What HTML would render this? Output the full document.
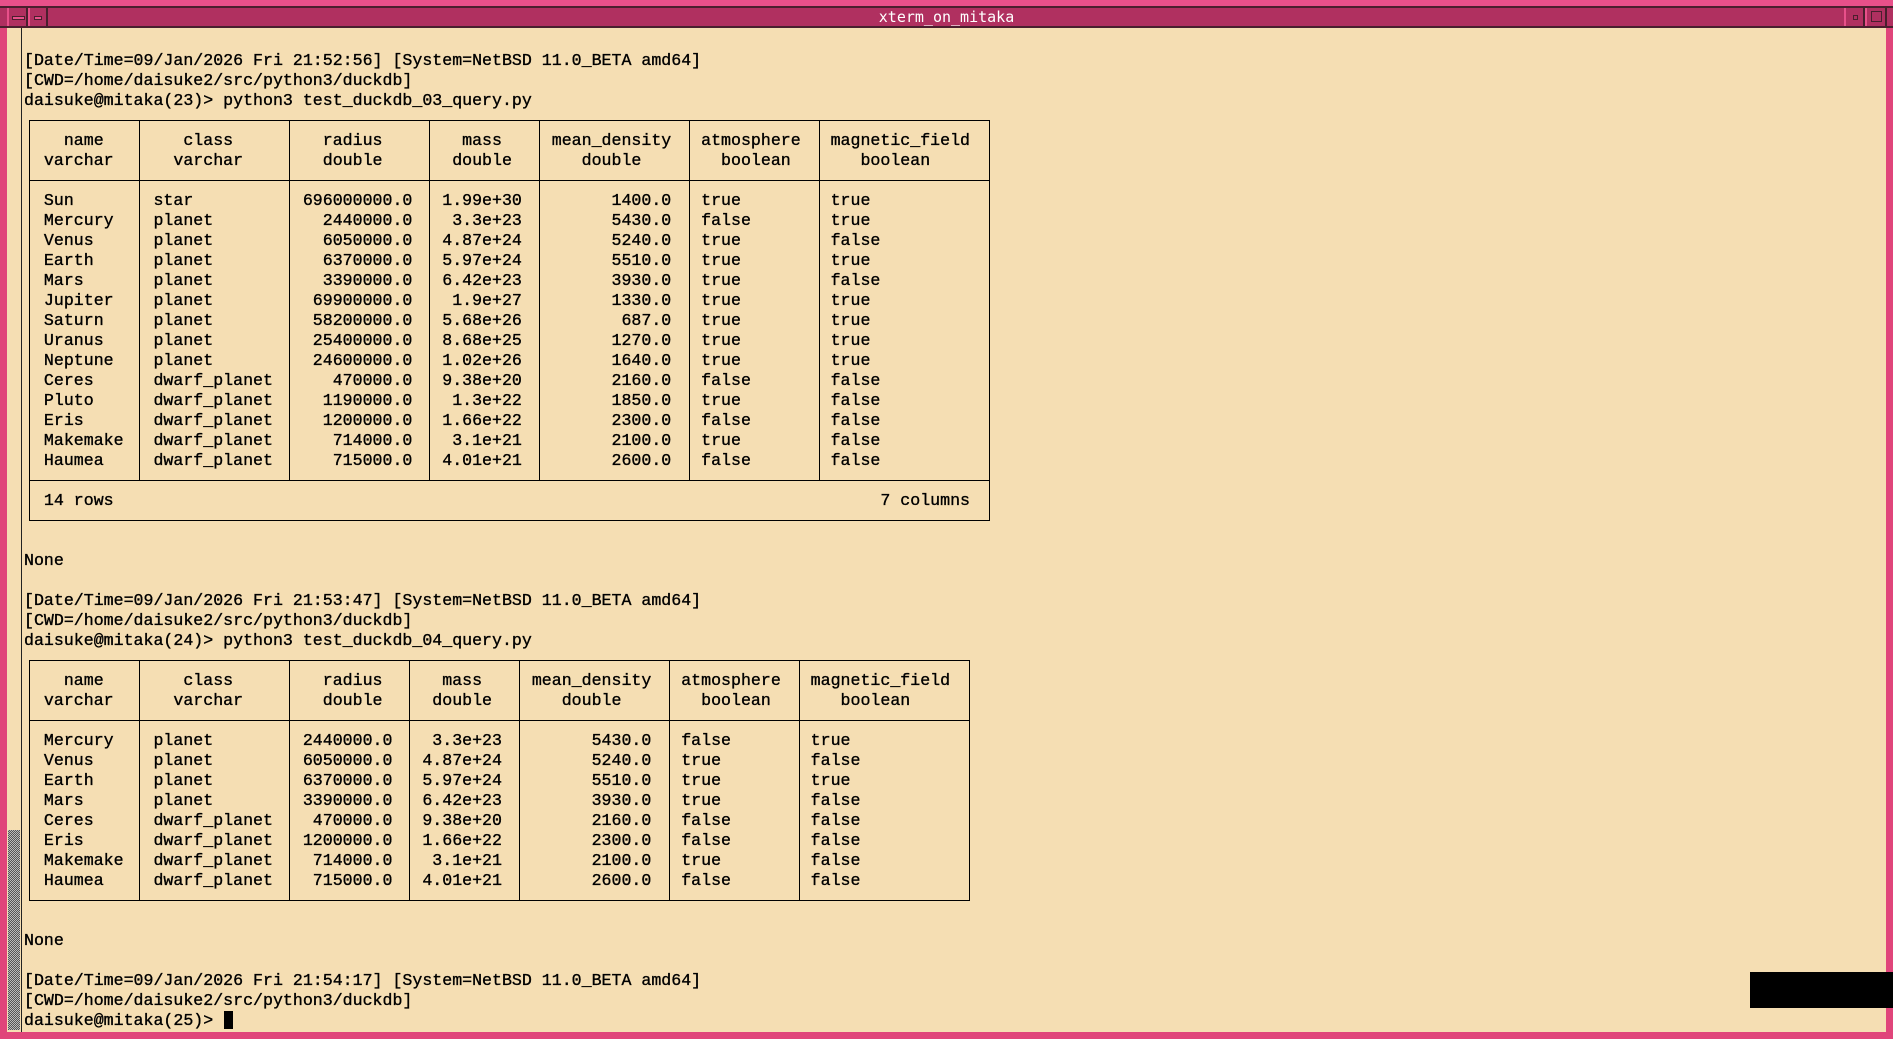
<!DOCTYPE html>
<html><head><meta charset="utf-8">
<style>
html,body{margin:0;padding:0;width:1893px;height:1039px;overflow:hidden;background:#f5deb3;}
#frame{position:absolute;left:0;top:0;width:1893px;height:1039px;background:#e0457a;}
#inner{position:absolute;left:7px;top:28px;width:1879px;height:1004px;background:#f5deb3;}
#tb{position:absolute;left:0;top:0;width:1893px;height:28px;background:#b03060;}
#tb .top{position:absolute;left:0;top:0;width:1893px;height:6px;background:#e8508a;border-bottom:2px solid #4a1f2e;}
#tb .bot{position:absolute;left:0;top:26px;width:1893px;height:2px;background:#4a1f2e;}
#title{position:absolute;left:0;width:1893px;top:9px;text-align:center;color:#fff;font:15px/17px "DejaVu Sans Mono","Liberation Mono",monospace;}
.btn{position:absolute;top:8px;height:18px;background:#b03060;border-left:2px solid #e8508a;border-right:2px solid #4a1f2e;}
#scroll{position:absolute;left:7px;top:28px;width:14px;height:1004px;border-right:1px solid #222;}
#thumb{position:absolute;left:8px;top:830px;width:12px;height:200px;background:repeating-conic-gradient(#555 0 25%,#bbb 0 50%) 0 0/2px 2px;}
#term{position:absolute;left:24px;top:51px;font:16.6px/20px "Liberation Mono",monospace;color:#000;white-space:pre;-webkit-text-stroke:0.35px #000;}
.h{position:absolute;height:1px;background:#000;}
.v{position:absolute;width:1px;background:#000;}
#blk{position:absolute;left:1750px;top:972px;width:143px;height:36px;background:#000;}
#cur{position:absolute;left:224px;top:1011px;width:9px;height:18px;background:#000;}
</style></head><body>
<div id="frame"></div>
<div id="inner"></div>
<div id="tb"><div class="top"></div><div class="bot"></div>
<div class="btn" style="left:7px;width:17px"><div style="position:absolute;left:3px;top:8px;width:11px;height:2px;border:1px solid #4a1f2e;background:#e8508a"></div></div>
<div class="btn" style="left:28px;width:16px"><div style="position:absolute;left:4px;top:8px;width:6px;height:2px;border:1px solid #4a1f2e;background:#e8508a"></div></div>
<div class="btn" style="left:1844px;width:17px"><div style="position:absolute;left:7px;top:7px;width:3px;height:3px;border:1px solid #4a1f2e"></div></div>
<div class="btn" style="left:1865px;width:18px"><div style="position:absolute;left:4px;top:3px;width:9px;height:9px;border:1px solid #4a1f2e"></div></div>
<div id="title">xterm_on_mitaka</div></div>
<div id="scroll"></div><div id="thumb"></div>
<div id="term"></div>
<div id="lines"></div>
<div id="cur"></div>
<div id="blk"></div>
<script>
function padC(s,w,off){return (' '.repeat(off)+s+' '.repeat(w)).slice(0,w);}
function padR(s,w){return (' '.repeat(w)+s+' ').slice(-w);}
function padL(s,w){return (' '+s+' '.repeat(w)).slice(0,w);}
var d1=[["Sun","star","696000000.0","1.99e+30","1400.0","true","true"],
["Mercury","planet","2440000.0","3.3e+23","5430.0","false","true"],
["Venus","planet","6050000.0","4.87e+24","5240.0","true","false"],
["Earth","planet","6370000.0","5.97e+24","5510.0","true","true"],
["Mars","planet","3390000.0","6.42e+23","3930.0","true","false"],
["Jupiter","planet","69900000.0","1.9e+27","1330.0","true","true"],
["Saturn","planet","58200000.0","5.68e+26","687.0","true","true"],
["Uranus","planet","25400000.0","8.68e+25","1270.0","true","true"],
["Neptune","planet","24600000.0","1.02e+26","1640.0","true","true"],
["Ceres","dwarf_planet","470000.0","9.38e+20","2160.0","false","false"],
["Pluto","dwarf_planet","1190000.0","1.3e+22","1850.0","true","false"],
["Eris","dwarf_planet","1200000.0","1.66e+22","2300.0","false","false"],
["Makemake","dwarf_planet","714000.0","3.1e+21","2100.0","true","false"],
["Haumea","dwarf_planet","715000.0","4.01e+21","2600.0","false","false"]];
var d2=d1.filter(function(r){return ["Mercury","Venus","Earth","Mars","Ceres","Eris","Makemake","Haumea"].indexOf(r[0])>=0;});
function table(data,W,h1off,h2off){
 var l=[];
 var h1=["name","class","radius","mass","mean_density","atmosphere","magnetic_field"];
 var h2=["varchar","varchar","double","double","double","boolean","boolean"];
 function row(cells){return ' '+cells.join(' ');}
 l.push(row(h1.map(function(s,i){return padC(s,W[i],h1off[i]);})));
 l.push(row(h2.map(function(s,i){return padC(s,W[i],h2off[i]);})));
 l.push('');
 data.forEach(function(r){l.push(row([padL(r[0],W[0]),padL(r[1],W[1]),padR(r[2],W[2]),padR(r[3],W[3]),padR(r[4],W[4]),padL(r[5],W[5]),padL(r[6],W[6])]));});
 return l;
}
var W1=[10,14,13,10,14,12,16],W2=[10,14,11,10,14,12,16];
var L=[];
L.push("[Date/Time=09/Jan/2026 Fri 21:52:56] [System=NetBSD 11.0_BETA amd64]");
L.push("[CWD=/home/daisuke2/src/python3/duckdb]");
L.push("daisuke@mitaka(23)> python3 test_duckdb_03_query.py");
L.push("");
L=L.concat(table(d1,W1,[3,4,3,3,1,1,1],[1,3,3,2,4,3,4]));
L.push("");
L.push(' '+padL("14 rows",30)+padR("7 columns",65));
L.push("");L.push("");L.push("None");L.push("");
L.push("[Date/Time=09/Jan/2026 Fri 21:53:47] [System=NetBSD 11.0_BETA amd64]");
L.push("[CWD=/home/daisuke2/src/python3/duckdb]");
L.push("daisuke@mitaka(24)> python3 test_duckdb_04_query.py");
L.push("");
L=L.concat(table(d2,W2,[3,4,3,3,1,1,1],[1,3,3,2,4,3,4]));
L.push("");L.push("");L.push("None");L.push("");
L.push("[Date/Time=09/Jan/2026 Fri 21:54:17] [System=NetBSD 11.0_BETA amd64]");
L.push("[CWD=/home/daisuke2/src/python3/duckdb]");
L.push("daisuke@mitaka(25)> ");
document.getElementById('term').textContent=L.join('\n');
var out='';
function X(c){return 29+10*c;}
function Y(r){return 60+20*r;}
function H(c1,c2,r){out+='<div class="h" style="left:'+X(c1)+'px;width:'+(X(c2)-X(c1)+1)+'px;top:'+Y(r)+'px"></div>';}
function V(c,r1,r2){out+='<div class="v" style="left:'+X(c)+'px;top:'+Y(r1)+'px;height:'+(Y(r2)-Y(r1)+1)+'px"></div>';}
var C1=[0,11,26,40,51,66,79,96];
H(0,96,3);H(0,96,6);H(0,96,21);H(0,96,23);
C1.forEach(function(c,i){V(c,3,(i==0||i==7)?23:21);});
var C2=[0,11,26,38,49,64,77,94];
H(0,94,30);H(0,94,33);H(0,94,42);
C2.forEach(function(c){V(c,30,42);});
document.getElementById('lines').innerHTML=out;
</script>
</body></html>
